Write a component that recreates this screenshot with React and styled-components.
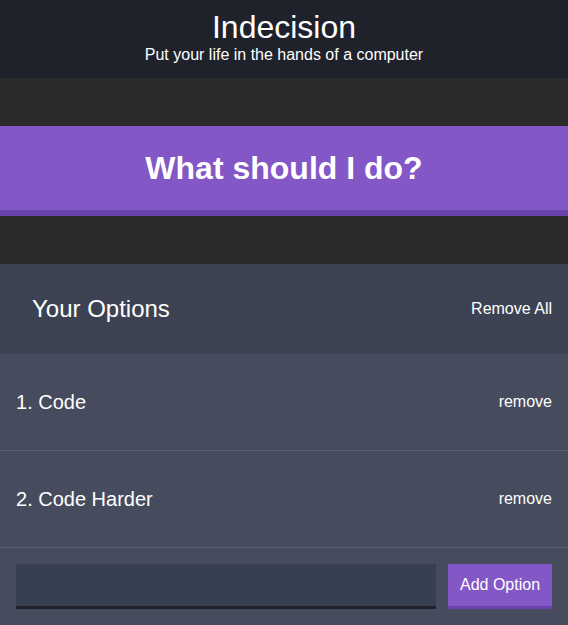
import React from "react";
import styled, { createGlobalStyle } from "styled-components";

const GlobalStyle = createGlobalStyle`
  html, body { margin: 0; padding: 0; }
  body {
    background: #2a2a2a;
    font-family: "Liberation Sans", Arial, sans-serif;
    color: #fff;
  }
  * { box-sizing: border-box; }
`;

const Header = styled.header`
  background: #20222b;
  height: 78px;
  display: flex;
  flex-direction: column;
  align-items: center;
  padding-top: 8px;
`;

const Title = styled.h1`
  margin: 0;
  font-size: 32px;
  font-weight: 400;
  line-height: 38px;
`;

const Subtitle = styled.h2`
  margin: 0;
  font-size: 16px;
  font-weight: 400;
  line-height: 18px;
`;

const Main = styled.main`
  padding-top: 48px;
`;

const BigButton = styled.button`
  display: block;
  width: 100%;
  height: 90px;
  margin: 0 0 48px;
  border: none;
  border-bottom: 6px solid #6a44ad;
  background: #8357c5;
  color: #fff;
  font-family: inherit;
  font-size: 32px;
  font-weight: 700;
  padding: 0;
`;

const Widget = styled.section`
  background: #464b5e;
`;

const WidgetHeader = styled.div`
  background: #3c4251;
  height: 90px;
  display: flex;
  align-items: center;
  justify-content: space-between;
  padding: 0 16px 0 32px;
`;

const WidgetTitle = styled.h3`
  margin: 0;
  font-size: 24px;
  font-weight: 400;
`;

const LinkButton = styled.button`
  background: none;
  border: none;
  padding: 0;
  color: #fff;
  font-family: inherit;
  font-size: 16px;
`;

const OptionRow = styled.div`
  height: 97px;
  display: flex;
  align-items: center;
  justify-content: space-between;
  padding: 0 16px;
  border-bottom: 1px solid #5c6178;
`;

const OptionText = styled.p`
  margin: 0;
  font-size: 20px;
`;

const Form = styled.form`
  display: flex;
  padding: 16px 16px 17px;
  gap: 12px;
`;

const Input = styled.input`
  flex: 1;
  min-width: 0;
  height: 45px;
  background: #364051;
  border: none;
  border-bottom: 3px solid #20222b;
  color: #fff;
  font-family: inherit;
  font-size: 16px;
  padding: 0 12px;
  outline: none;
`;

const AddButton = styled.button`
  flex: none;
  height: 45px;
  width: 104px;
  background: #8357c5;
  border: none;
  border-bottom: 3px solid #6a44ad;
  color: #fff;
  font-family: inherit;
  font-size: 16px;
  padding: 0;
`;

const options = ["Code", "Code Harder"];

export default function App() {
  return (
    <>
      <GlobalStyle />
      <Header>
        <Title>Indecision</Title>
        <Subtitle>Put your life in the hands of a computer</Subtitle>
      </Header>
      <Main>
        <BigButton>What should I do?</BigButton>
        <Widget>
          <WidgetHeader>
            <WidgetTitle>Your Options</WidgetTitle>
            <LinkButton>Remove All</LinkButton>
          </WidgetHeader>
          {options.map((o, i) => (
            <OptionRow key={o}>
              <OptionText>{i + 1}. {o}</OptionText>
              <LinkButton>remove</LinkButton>
            </OptionRow>
          ))}
          <Form onSubmit={(e) => e.preventDefault()}>
            <Input type="text" />
            <AddButton>Add Option</AddButton>
          </Form>
        </Widget>
      </Main>
    </>
  );
}
